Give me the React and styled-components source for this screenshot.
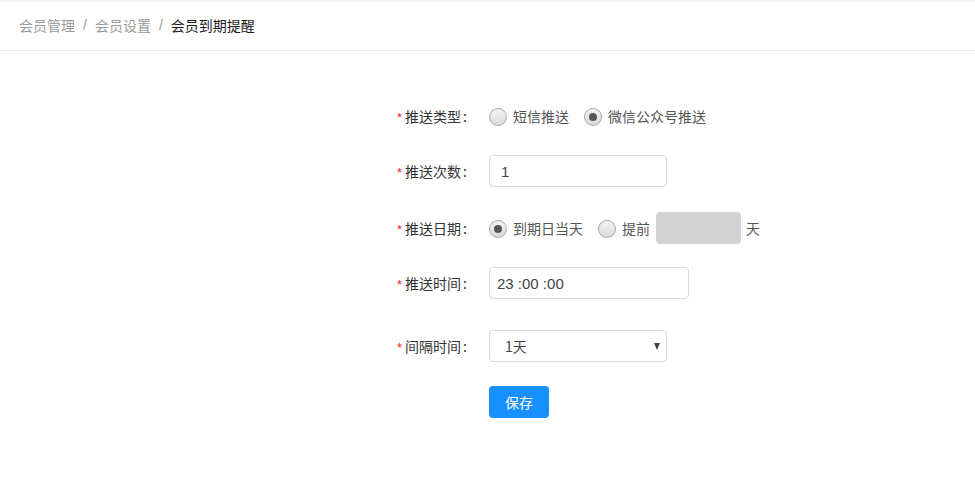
import React from "react";
import styled, { createGlobalStyle } from "styled-components";

const Global = createGlobalStyle`
  html, body { margin: 0; padding: 0; background: #fff; }
  body { font-family: "Noto Sans CJK SC", "Liberation Sans", sans-serif; font-size: 14px; color: #333; }
  * { box-sizing: border-box; }
`;

const Page = styled.div`
  width: 975px;
  min-height: 491px;
  background: #fff;
  position: relative;
`;

const Header = styled.div`
  height: 51px;
  border-bottom: 1px solid #e8e8e8;
  display: flex;
  align-items: center;
  padding-left: 19px;
  padding-bottom: 1px;
  background: linear-gradient(to bottom, #eceeee 0px, #f8f9f9 2px, #ffffff 5px);
`;

const Crumb = styled.span`
  font-size: 14px;
  color: ${(p) => (p.$current ? "#1a1a1a" : "#999")};
  line-height: 20px;
`;

const Sep = styled.span`
  color: #999;
  margin: 0 8px 0 8px;
  font-family: "Liberation Sans", sans-serif;
  font-size: 14px;
`;

const Form = styled.div`
  padding-top: 49px;
  padding-left: 397px;
`;

const Item = styled.div`
  display: flex;
  align-items: center;
  height: 32px;
  margin-bottom: ${(p) => p.$mb}px;
`;

const Label = styled.div`
  width: 92px;
  padding-right: 20px;
  padding-bottom: 1px;
  display: flex;
  align-items: center;
  font-size: 14px;
  color: #333;
  white-space: nowrap;
`;

const Star = styled.span`
  color: #f5222d;
  font-family: "Liberation Sans", sans-serif;
  font-size: 13px;
  margin-right: 3px;
  margin-top: 3px;
`;

const Colon = styled.span`
  margin-left: 2px;
`;

const RadioWrap = styled.label`
  display: inline-flex;
  align-items: center;
  margin-right: ${(p) => p.$mr || 0}px;
  cursor: pointer;
  font-size: 14px;
  color: #555;
`;

const RadioCircle = styled.span`
  width: 18px;
  height: 18px;
  border-radius: 50%;
  border: 1px solid #a9a9a9;
  background: linear-gradient(to bottom, #f3f3f3, #dadada);
  display: inline-flex;
  align-items: center;
  justify-content: center;
  margin-right: 6px;
  margin-top: 1px;
  &::after {
    content: "";
    display: ${(p) => (p.$checked ? "block" : "none")};
    width: 8px;
    height: 8px;
    border-radius: 50%;
    background: #555;
  }
`;

const Input = styled.div`
  width: ${(p) => p.$w}px;
  height: ${(p) => p.$h || 32}px;
  border: 1px solid #d9d9d9;
  border-radius: 4px;
  display: flex;
  align-items: center;
  padding-left: ${(p) => p.$pl || 11}px;
  font-family: "Liberation Sans", "Noto Sans CJK SC", sans-serif;
  font-size: 15px;
  color: #444;
`;

const GreyBox = styled.div`
  width: 85px;
  height: 32px;
  border-radius: 4px;
  background: #d3d3d3;
  margin: 0 5px 0 6px;
`;

const Select = styled.div`
  width: 178px;
  height: 32px;
  border: 1px solid #d9d9d9;
  border-radius: 4px;
  display: flex;
  align-items: center;
  justify-content: space-between;
  padding-left: 15px;
  padding-right: 5px;
  font-size: 14px;
  color: #444;
`;

const Caret = styled.span`
  width: 0;
  height: 0;
  border-left: 3.5px solid transparent;
  border-right: 3.5px solid transparent;
  border-top: 7px solid #444;
  margin-right: 1px;
`;

const Suffix = styled.span`
  font-size: 14px;
  color: #555;
`;

const Button = styled.button`
  margin-left: 92px;
  width: 60px;
  height: 32px;
  border: none;
  border-radius: 4px;
  background: #1890ff;
  color: #fff;
  font-family: "Noto Sans CJK SC", sans-serif;
  font-size: 14px;
  cursor: pointer;
`;

const Field = ({ label, children, mb }) => (
  <Item $mb={mb}>
    <Label>
      <Star>*</Star>
      {label}
      <Colon>:</Colon>
    </Label>
    {children}
  </Item>
);

export default function App() {
  return (
    <Page>
      <Global />
      <Header>
        <Crumb>会员管理</Crumb>
        <Sep>/</Sep>
        <Crumb>会员设置</Crumb>
        <Sep>/</Sep>
        <Crumb $current>会员到期提醒</Crumb>
      </Header>
      <Form>
        <Field label="推送类型" mb={23}>
          <RadioWrap $mr={15}>
            <RadioCircle />
            短信推送
          </RadioWrap>
          <RadioWrap>
            <RadioCircle $checked />
            微信公众号推送
          </RadioWrap>
        </Field>
        <Field label="推送次数" mb={25}>
          <Input $w={178} $pl={11}>1</Input>
        </Field>
        <Field label="推送日期" mb={23}>
          <RadioWrap $mr={15}>
            <RadioCircle $checked />
            到期日当天
          </RadioWrap>
          <RadioWrap>
            <RadioCircle />
            提前
          </RadioWrap>
          <GreyBox />
          <Suffix>天</Suffix>
        </Field>
        <Field label="推送时间" mb={31}>
          <Input $w={200} $pl={7}>23 :00 :00</Input>
        </Field>
        <Field label="间隔时间" mb={24}>
          <Select>
            <span>1天</span>
            <Caret />
          </Select>
        </Field>
        <Button>保存</Button>
      </Form>
    </Page>
  );
}
